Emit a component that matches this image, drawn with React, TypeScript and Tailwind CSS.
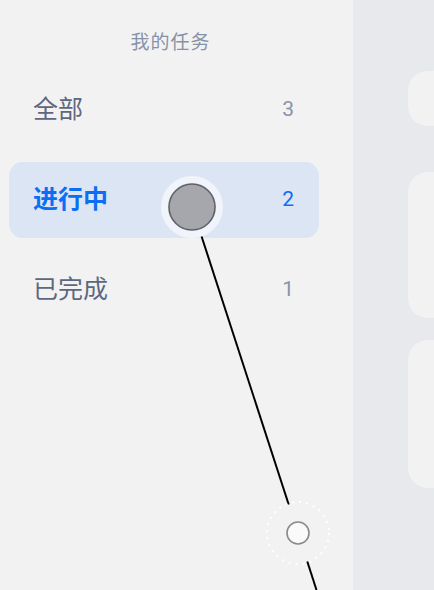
import { useState } from "react";

type Filter = {
    key: string;
    label: string;
    count: number;
};

const FILTERS: Filter[] = [
    { key: "all", label: "全部", count: 3 },
    { key: "doing", label: "进行中", count: 2 },
    { key: "done", label: "已完成", count: 1 },
];

function TouchTrail() {
    // drag gesture: finger down on the active row, sliding toward the bottom right
    return (
        <svg className="pointer-events-none absolute inset-0" width="434" height="590" viewBox="0 0 434 590">
            <circle cx="192" cy="207" r="27.5" fill="none" stroke="#ffffff" strokeOpacity="0.6" strokeWidth="7" />
            <circle cx="192" cy="207" r="23" fill="#a5a7ac" stroke="#626366" strokeWidth="1.6" />
            <line x1="201.6" y1="236.5" x2="288.7" y2="504.5" stroke="#000" strokeWidth="2" />
            <circle cx="298" cy="533" r="31" fill="none" stroke="#ffffff" strokeWidth="2" strokeDasharray="2 5" />
            <circle cx="298" cy="533" r="11" fill="#fafafa" stroke="#8a8a8a" strokeWidth="1.6" />
            <line x1="307.3" y1="561.5" x2="316.5" y2="590" stroke="#000" strokeWidth="2" />
        </svg>
    );
}

export default function App() {
    const [active, setActive] = useState("doing");

    return (
        <div
            className="relative flex h-[590px] w-[434px] overflow-hidden bg-[#e8e9ed]"
            style={{ fontFamily: '"Roboto", "Noto Sans CJK SC", sans-serif' }}
        >
            <aside className="flex w-[353px] shrink-0 flex-col bg-[#f2f2f2] px-[9px]">
                <h2 className="flex h-[72px] items-center justify-center pr-[12px] pt-[14px] text-[19px] tracking-[1px] text-[#8892a7]">
                    我的任务
                </h2>
                <ul className="flex w-[310px] flex-col gap-[14px]">
                    {FILTERS.map((f) => {
                        const isActive = f.key === active;
                        return (
                            <li
                                key={f.key}
                                onClick={() => setActive(f.key)}
                                className={
                                    isActive
                                        ? "flex h-[76px] items-center justify-between rounded-[14px] bg-[#dce5f4] pl-6 pr-[25px]"
                                        : "flex h-[76px] items-center justify-between rounded-[14px] pl-6 pr-[25px]"
                                }
                            >
                                <span
                                    className={
                                        isActive
                                            ? "text-[25px] font-bold text-[#0b6ef3]"
                                            : "text-[25px] text-[#5e6780]"
                                    }
                                >
                                    {f.label}
                                </span>
                                <span className={isActive ? "text-[21px] text-[#0b6ef3]" : "text-[21px] text-[#8a93a8]"}>
                                    {f.count}
                                </span>
                            </li>
                        );
                    })}
                </ul>
            </aside>
            <main className="flex flex-1 flex-col pl-[55px] pt-[71px]">
                <div className="h-[55px] w-[60px] rounded-l-[20px] bg-[#f2f2f2]" />
                <div className="mt-[46px] h-[146px] w-[60px] rounded-l-[20px] bg-[#f2f2f2]" />
                <div className="mt-[22px] h-[148px] w-[60px] rounded-l-[20px] bg-[#f2f2f2]" />
            </main>
            <TouchTrail />
        </div>
    );
}
